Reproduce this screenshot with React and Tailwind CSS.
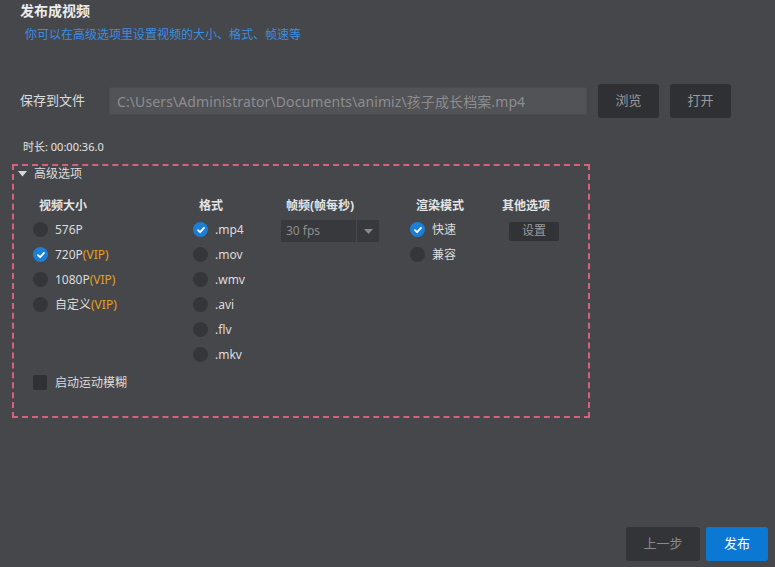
import React, { useState } from "react";

const font = "font-['Noto_Sans','Noto_Sans_CJK_SC',sans-serif]";

function Radio({ checked }) {
  if (checked)
    return (
      <span className="w-[15px] h-[15px] rounded-full bg-[#1c7fd6] flex items-center justify-center shrink-0">
        <svg width="10" height="10" viewBox="0 0 10 10">
          <path d="M2 5.2 L4.1 7.2 L8 2.9" stroke="#fff" strokeWidth="1.8" fill="none" strokeLinecap="round" strokeLinejoin="round" />
        </svg>
      </span>
    );
  return <span className="w-[15px] h-[15px] rounded-full bg-[#35363a] shrink-0" />;
}

function Option({ label, vip, checked, onClick }) {
  return (
    <div className="h-[25px] flex items-center cursor-pointer" onClick={onClick}>
      <Radio checked={checked} />
      <span className="ml-[7px] text-[12px] text-[#dcdcdc]">
        {label}
        {vip && <span className="text-[#e6a01a]">(VIP)</span>}
      </span>
    </div>
  );
}

export default function App() {
  const [size, setSize] = useState("720P");
  const [format, setFormat] = useState(".mp4");
  const [render, setRender] = useState("快速");

  const sizes = [
    { label: "576P" },
    { label: "720P", vip: true },
    { label: "1080P", vip: true },
    { label: "自定义", vip: true },
  ];
  const formats = [".mp4", ".mov", ".wmv", ".avi", ".flv", ".mkv"];

  return (
    <div className={`w-[775px] h-[567px] bg-[#46474b] flex flex-col ${font}`}>
      {/* header */}
      <div className="h-[20px] flex items-center pl-[20px] text-[14px] font-bold text-[#ececec]">
        发布成视频
      </div>
      <div className="h-[20px] mt-[5px] flex items-center pl-[25px] text-[12px] text-[#3b8de0]">
        你可以在高级选项里设置视频的大小、格式、帧速等
      </div>

      {/* save path */}
      <div className="h-[34px] mt-[39px] flex items-center pl-[20px]">
        <span className="w-[89px] text-[13px] text-[#dcdcdc]">保存到文件</span>
        <div className="w-[478px] h-[28px] bg-[#525357] border border-[#4a4b4f] flex items-center pl-[7px] text-[14px] tracking-[0.1px] text-[#8d8d8f]">
          C:\Users\Administrator\Documents\animiz\孩子成长档案.mp4
        </div>
        <button className="ml-[11px] w-[61px] h-[34px] rounded-[3px] bg-[#2f3034] text-[13px] text-[#9a9a9c]">
          浏览
        </button>
        <button className="ml-[11px] w-[61px] h-[34px] rounded-[3px] bg-[#2f3034] text-[13px] text-[#9a9a9c]">
          打开
        </button>
      </div>

      <div className="h-[16px] mt-[21px] flex items-center pl-[23px] text-[11px] text-[#e4e4e4]">
        时长: 00:00:36.0
      </div>

      {/* advanced options */}
      <div className="mt-[9px] ml-[12px] w-[578px] h-[254px] border-2 border-dashed border-[#d9607a] flex flex-col">
        <div className="h-[16px] flex items-center pl-[4px] text-[12px] text-[#dcdcdc]">
          <svg width="9" height="6" viewBox="0 0 9 6" className="mr-[7px]">
            <path d="M0 0 L9 0 L4.5 5.5 Z" fill="#d8d8d8" />
          </svg>
          高级选项
        </div>

        <div className="flex pl-[19px] mt-[13px]">
          <div className="w-[160px]">
            <div className="h-[22px] flex items-center pl-[6px] text-[12px] font-bold text-[#e4e4e4]">视频大小</div>
            {sizes.map((s) => (
              <Option key={s.label} label={s.label} vip={s.vip} checked={size === s.label} onClick={() => setSize(s.label)} />
            ))}
          </div>
          <div className="w-[88px]">
            <div className="h-[22px] flex items-center pl-[6px] text-[12px] font-bold text-[#e4e4e4]">格式</div>
            {formats.map((f) => (
              <Option key={f} label={f} checked={format === f} onClick={() => setFormat(f)} />
            ))}
          </div>
          <div className="w-[129px]">
            <div className="h-[22px] flex items-center pl-[5px] text-[12px] font-bold text-[#e4e4e4]">帧频(帧每秒)</div>
            <div className="mt-[3px] w-[98px] h-[22px] bg-[#38393d] flex items-center">
              <span className="flex-1 pl-[5px] text-[12px] text-[#8d8d8f]">30 fps</span>
              <span className="w-px h-full bg-[#48494d]" />
              <span className="w-[22px] flex items-center justify-center">
                <svg width="9" height="5" viewBox="0 0 9 5">
                  <path d="M0 0 L9 0 L4.5 5 Z" fill="#8a8a8c" />
                </svg>
              </span>
            </div>
          </div>
          <div className="w-[92px]">
            <div className="h-[22px] flex items-center pl-[6px] text-[12px] font-bold text-[#e4e4e4]">渲染模式</div>
            {["快速", "兼容"].map((r) => (
              <Option key={r} label={r} checked={render === r} onClick={() => setRender(r)} />
            ))}
          </div>
          <div>
            <div className="h-[22px] flex items-center text-[12px] font-bold text-[#e4e4e4]">其他选项</div>
            <button className="mt-[4px] ml-[7px] w-[50px] h-[19px] rounded-[2px] bg-[#323337] text-[12px] text-[#9a9a9c] leading-none">
              设置
            </button>
          </div>
        </div>

        <div className="h-[25px] mt-[3px] ml-[19px] flex items-center">
          <span className="w-[14px] h-[15px] rounded-[2px] bg-[#303135]" />
          <span className="ml-[8px] text-[12px] text-[#dcdcdc]">启动运动模糊</span>
        </div>
      </div>

      {/* footer */}
      <div className="mt-auto mb-[6px] mr-[7px] self-end flex gap-[6px]">
        <button className="w-[74px] h-[34px] rounded-[3px] bg-[#333438] text-[13px] text-[#8a8a8c]">上一步</button>
        <button className="w-[62px] h-[34px] rounded-[3px] bg-[#0b79d4] text-[13px] text-white">发布</button>
      </div>
    </div>
  );
}
